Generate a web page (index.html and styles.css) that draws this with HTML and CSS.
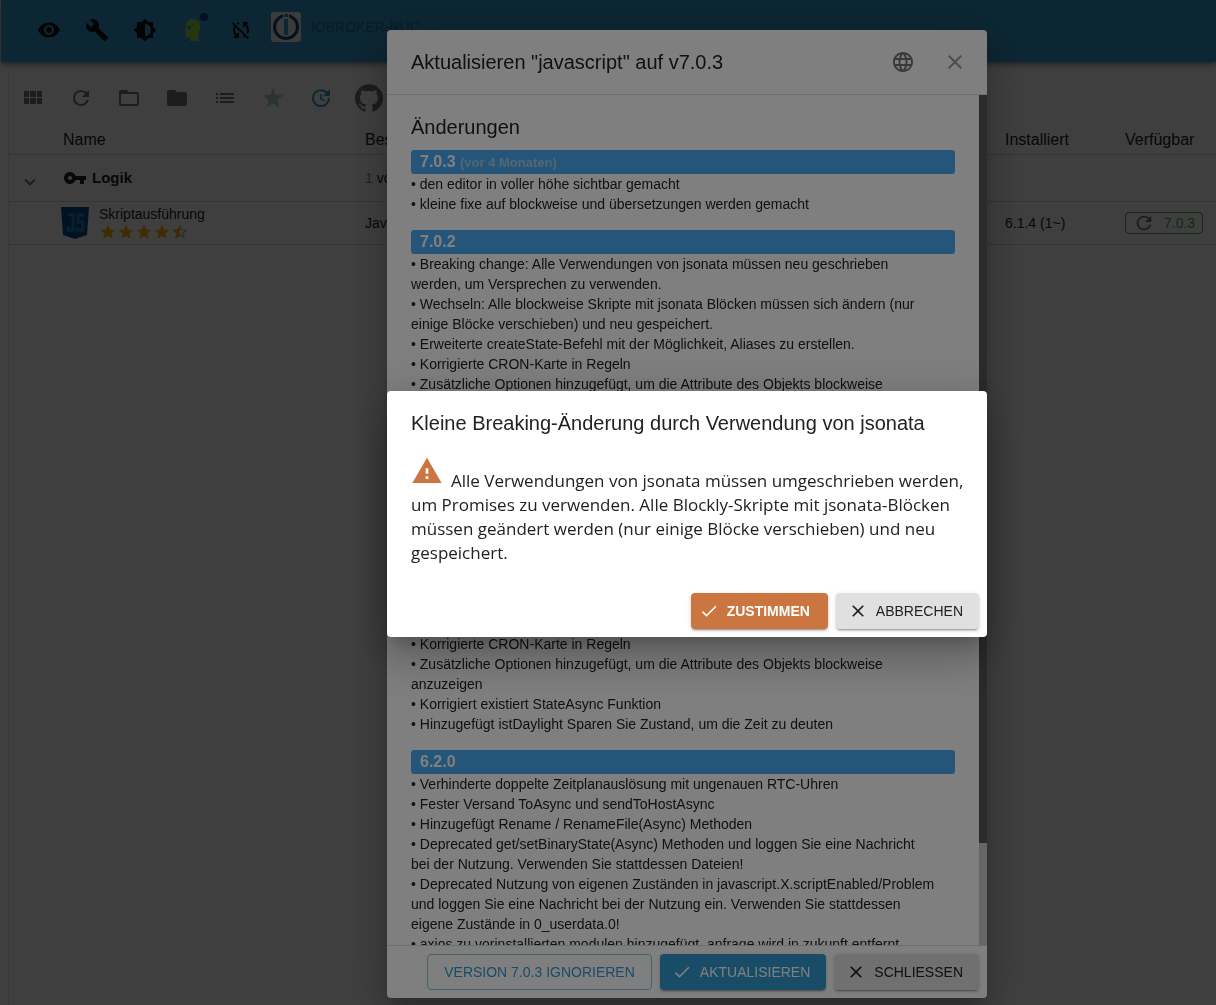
FILE: index.html
```html
<!DOCTYPE html>
<html lang="de">
<head>
    <meta charset="utf-8">
    <title>ioBroker</title>
    <link rel="stylesheet" href="styles.css">
</head>
<body>
<div class="app">
    <header class="appbar">
        <button class="icon-btn" aria-label="Anzeigen"><svg class="icon" viewBox="0 0 24 24"><path d="M12 4.5C7 4.5 2.73 7.61 1 12c1.73 4.39 6 7.5 11 7.5s9.27-3.11 11-7.5c-1.73-4.39-6-7.5-11-7.5zM12 17c-2.76 0-5-2.24-5-5s2.24-5 5-5 5 2.24 5 5-2.24 5-5 5zm0-8c-1.66 0-3 1.34-3 3s1.34 3 3 3 3-1.34 3-3-1.34-3-3-3z"/></svg></button>
        <button class="icon-btn" aria-label="Einstellungen"><svg class="icon" viewBox="0 0 24 24"><path d="M22.7 19l-9.1-9.1c.9-2.3.4-5-1.5-6.9-2-2-5-2.4-7.4-1.3L9 6 6 9 1.6 4.7C.4 7.1.9 10.1 2.9 12.1c1.9 1.9 4.6 2.4 6.9 1.5l9.1 9.1c.4.4 1 .4 1.4 0l2.3-2.3c.5-.4.5-1.1.1-1.4z"/></svg></button>
        <button class="icon-btn" aria-label="Farbschema"><svg class="icon" viewBox="0 0 24 24"><path d="M20 15.31L23.31 12 20 8.69V4h-4.69L12 .69 8.69 4H4v4.69L.69 12 4 15.31V20h4.69L12 23.31 15.31 20H20v-4.69zM12 18V6c3.31 0 6 2.69 6 6s-2.69 6-6 6z"/></svg></button>
        <button class="icon-btn expert" aria-label="Expertenmodus">
            <svg class="icon" viewBox="0 0 24 24"><path fill-rule="evenodd" d="M12 1c4.500 0 7.500 3 7.500 7.500 0 3-1.300 5-2 7V23H9v-3.500H6.500C5 19.500 4.500 19 4.500 17.500V14L3.500 13.500 4.500 10C4.500 4 7.500 1 12 1zM8 7.500a2 2 0 1 0 0 4 2 2 0 0 0 0-4zm4-1.500a1 1 0 1 0 0 2 1 1 0 0 0 0-2z"/></svg>
            <span class="badge"></span>
        </button>
        <button class="icon-btn" aria-label="Synchronisierung aus"><svg class="icon" viewBox="0 0 24 24"><path d="M10 6.350V4.260c-.8.210-1.550.540-2.230.960l1.460 1.460c.250-.120.500-.240.770-.330zm-7.140-.940l2.360 2.360C4.450 8.990 4 10.440 4 12c0 2.210.910 4.200 2.360 5.640L4 20h6v-6l-2.240 2.240C6.680 15.150 6 13.660 6 12c0-1 .250-1.940.680-2.770l8.080 8.080c-.250.130-.500.250-.770.340v2.090c.8-.210 1.550-.540 2.230-.960l2.360 2.360 1.270-1.270L4.140 4.140 2.860 5.410zM20 4h-6v6l2.240-2.240C17.320 8.850 18 10.340 18 12c0 1-.250 1.940-.680 2.770l1.460 1.460C19.550 15.010 20 13.560 20 12c0-2.210-.910-4.200-2.360-5.640L20 4z"/></svg></button>
        <svg class="logo" viewBox="0 0 30 30"><rect width="30" height="30" rx="3" fill="#eee"/><circle cx="15" cy="15" r="11.500" fill="none" stroke="#164477" stroke-width="3"/><path fill="#eee" d="M12 0h6v7h-6z"/><path fill="#3399cc" d="M13 2h4v3h-4zM13 7h4v16h-4z"/></svg>
        <span class="host">IOBROKER-NUC</span>
    </header>

    <main class="paper">
        <div class="tools">
            <button class="icon-btn" aria-label="Kacheln"><svg class="icon" viewBox="0 0 24 24"><path d="M3 11h5V5H3v6zm0 7h5v-6H3v6zm6 0h6v-6H9v6zm7 0h5v-6h-5v6zM9 11h6V5H9v6zm7-6v6h5V5h-5z"/></svg></button>
            <button class="icon-btn" aria-label="Neu laden"><svg class="icon" viewBox="0 0 24 24"><path d="M17.650 6.350C16.200 4.900 14.210 4 12 4c-4.420 0-7.990 3.580-7.990 8s3.570 8 7.990 8c3.730 0 6.840-2.550 7.730-6h-2.080c-.820 2.330-3.040 4-5.650 4-3.310 0-6-2.690-6-6s2.690-6 6-6c1.660 0 3.140.690 4.220 1.780L13 11h7V4l-2.350 2.350z"/></svg></button>
            <button class="icon-btn" aria-label="Alle zuklappen"><svg class="icon" viewBox="0 0 24 24"><path d="M20 6h-8l-2-2H4c-1.100 0-1.990.900-1.990 2L2 18c0 1.100.900 2 2 2h16c1.100 0 2-.900 2-2V8c0-1.100-.900-2-2-2zm0 12H4V8h16v10z"/></svg></button>
            <button class="icon-btn" aria-label="Alle aufklappen"><svg class="icon" viewBox="0 0 24 24"><path d="M10 4H4c-1.100 0-1.990.900-1.990 2L2 18c0 1.100.900 2 2 2h16c1.100 0 2-.900 2-2V8c0-1.100-.900-2-2-2h-8l-2-2z"/></svg></button>
            <button class="icon-btn" aria-label="Liste"><svg class="icon" viewBox="0 0 24 24"><path d="M3 13h2v-2H3v2zm0 4h2v-2H3v2zm0-8h2V7H3v2zm4 4h14v-2H7v2zm0 4h14v-2H7v2zM7 7v2h14V7H7z"/></svg></button>
            <button class="icon-btn star-btn" aria-label="Favoriten"><svg class="icon" viewBox="0 0 24 24"><path d="M12 17.270L18.180 21l-1.640-7.030L22 9.240l-7.190-.610L12 2 9.190 8.630 2 9.240l5.460 4.730L5.820 21z"/></svg></button>
            <button class="icon-btn active" aria-label="Aktualisierungen"><svg class="icon" viewBox="0 0 24 24"><path d="M21 10.120h-6.780l2.740-2.820c-2.730-2.700-7.150-2.800-9.880-.100-2.730 2.710-2.730 7.080 0 9.790s7.150 2.710 9.880 0C18.320 15.650 19 14.080 19 12.100h2c0 1.980-.880 4.550-2.640 6.290-3.510 3.480-9.210 3.480-12.720 0-3.500-3.470-3.530-9.110-.020-12.580s9.140-3.470 12.650 0L21 3v7.120zM12.500 8v4.250l3.500 2.080-.720 1.210L11 13V8h1.500z"/></svg></button>
            <button class="icon-btn" aria-label="GitHub"><svg class="icon github" viewBox="0 0 24 24"><path d="M12 .300a12 12 0 0 0-3.800 23.400c.600.100.800-.300.800-.600v-2c-3.300.700-4-1.600-4-1.600-.600-1.400-1.400-1.800-1.400-1.800-1-.700.100-.700.100-.700 1.200 0 1.900 1.200 1.900 1.200 1 1.800 2.800 1.300 3.500 1 0-.800.400-1.300.700-1.600-2.700-.300-5.500-1.300-5.500-6 0-1.200.500-2.300 1.300-3.100-.200-.400-.600-1.600 0-3.200 0 0 1-.300 3.400 1.200a11.500 11.500 0 0 1 6 0c2.300-1.500 3.300-1.200 3.300-1.200.600 1.600.200 2.800 0 3.200.900.800 1.300 1.900 1.300 3.200 0 4.600-2.800 5.600-5.500 5.900.500.400.900 1 .900 2.200v3.300c0 .300.100.700.800.600A12 12 0 0 0 12 .300"/></svg></button>
        </div>

        <table class="adapters">
            <colgroup><col class="col-toggle"><col class="col-name"><col><col class="col-installed"><col class="col-available"></colgroup>
            <thead>
                <tr><th></th><th>Name</th><th>Beschreibung</th><th>Installiert</th><th>Verfügbar</th></tr>
            </thead>
            <tbody>
                <tr class="group">
                    <td><button class="toggle" aria-label="Zuklappen"><svg viewBox="0 0 24 24"><path d="M16.590 8.590L12 13.170 7.410 8.590 6 10l6 6 6-6z"/></svg></button></td>
                    <td><div class="group-name"><svg class="icon" viewBox="0 0 24 24"><path d="M12.650 10C11.830 7.670 9.610 6 7 6c-3.310 0-6 2.690-6 6s2.690 6 6 6c2.610 0 4.830-1.670 5.650-4H17v4h4v-4h2v-4H12.650zM7 14c-1.100 0-2-.900-2-2s.900-2 2-2 2 .900 2 2-.900 2-2 2z"/></svg>Logik</div></td>
                    <td><span class="green">1</span> von 1</td>
                    <td></td>
                    <td></td>
                </tr>
                <tr class="adapter">
                    <td></td>
                    <td>
                        <div class="adapter-name">
                            <svg class="js" viewBox="0 0 28 32"><path fill="#004a90" d="M0 0h28l-2 28-12 4-12-4z"/><path fill="none" stroke="#2a86ac" stroke-width="3" d="M7 8h5v15H7v-4M23 8h-6v7h5v8h-6v-3"/></svg>
                            <div>
                                <div>Skriptausführung</div>
                                <div class="rating">
                                    <svg viewBox="0 0 24 24"><path d="M12 17.270L18.180 21l-1.640-7.030L22 9.240l-7.190-.610L12 2 9.190 8.630 2 9.240l5.460 4.730L5.820 21z"/></svg>
                                    <svg viewBox="0 0 24 24"><path d="M12 17.270L18.180 21l-1.640-7.030L22 9.240l-7.190-.610L12 2 9.190 8.630 2 9.240l5.460 4.730L5.820 21z"/></svg>
                                    <svg viewBox="0 0 24 24"><path d="M12 17.270L18.180 21l-1.640-7.030L22 9.240l-7.190-.610L12 2 9.190 8.630 2 9.240l5.460 4.730L5.820 21z"/></svg>
                                    <svg viewBox="0 0 24 24"><path d="M12 17.270L18.180 21l-1.640-7.030L22 9.240l-7.190-.610L12 2 9.190 8.630 2 9.240l5.460 4.730L5.820 21z"/></svg>
                                    <svg viewBox="0 0 24 24"><path fill="#aaa" d="M22 9.240l-7.190-.620L12 2 9.190 8.630 2 9.240l5.460 4.730L5.820 21 12 17.270 18.180 21l-1.630-7.030L22 9.240zM12 15.400V6.100l1.710 4.040 4.380.380-3.320 2.880 1 4.280L12 15.400z"/><path d="M12 2v15.270L5.820 21l1.640-7.030L2 9.240l7.190-.610z"/></svg>
                                </div>
                            </div>
                        </div>
                    </td>
                    <td>Javascript/Blockly</td>
                    <td>6.1.4 (1~)</td>
                    <td><button class="update"><svg viewBox="0 0 24 24"><path d="M17.650 6.350C16.200 4.900 14.210 4 12 4c-4.420 0-7.990 3.580-7.990 8s3.570 8 7.990 8c3.730 0 6.840-2.550 7.730-6h-2.080c-.820 2.330-3.040 4-5.650 4-3.310 0-6-2.690-6-6s2.690-6 6-6c1.660 0 3.140.690 4.220 1.780L13 11h7V4l-2.350 2.350z"/></svg>7.0.3</button></td>
                </tr>
            </tbody>
        </table>
    </main>
</div>

<div class="overlay">
    <section class="dialog changes" role="dialog" aria-label="Aktualisieren">
        <div class="dialog-head">
            <h2>Aktualisieren "javascript" auf v7.0.3</h2>
            <button class="head-btn" aria-label="Sprache"><svg class="icon" viewBox="0 0 24 24"><path d="M11.990 2C6.470 2 2 6.480 2 12s4.470 10 9.990 10C17.520 22 22 17.520 22 12S17.520 2 11.990 2zm6.930 6h-2.950c-.320-1.250-.780-2.450-1.380-3.560 1.840.630 3.370 1.910 4.330 3.560zM12 4.040c.830 1.200 1.480 2.530 1.910 3.960h-3.820c.430-1.430 1.080-2.760 1.910-3.960zM4.260 14C4.100 13.360 4 12.690 4 12s.100-1.360.260-2h3.380c-.080.660-.140 1.320-.140 2s.060 1.340.140 2H4.260zm.820 2h2.950c.320 1.250.780 2.450 1.380 3.560-1.840-.630-3.370-1.900-4.330-3.560zm2.950-8H5.080c.960-1.660 2.490-2.930 4.330-3.560C8.810 5.550 8.350 6.750 8.030 8zM12 19.960c-.830-1.200-1.480-2.530-1.910-3.960h3.820c-.430 1.430-1.080 2.760-1.910 3.960zM14.340 14H9.660c-.090-.660-.160-1.320-.160-2s.070-1.350.160-2h4.680c.090.650.160 1.320.160 2s-.070 1.340-.160 2zm.250 5.560c.600-1.110 1.060-2.310 1.380-3.560h2.950c-.960 1.650-2.490 2.930-4.330 3.560zM16.360 14c.080-.660.140-1.320.140-2s-.060-1.340-.140-2h3.380c.160.640.260 1.310.260 2s-.100 1.360-.260 2h-3.380z"/></svg></button>
            <button class="head-btn light" aria-label="Dialog schließen"><svg class="icon" viewBox="0 0 24 24"><path d="M19 6.410L17.590 5 12 10.590 6.410 5 5 6.410 10.590 12 5 17.590 6.410 19 12 13.410 17.590 19 19 17.590 13.410 12z"/></svg></button>
        </div>
        <div class="dialog-body">
            <div class="log">
                <h3>Änderungen</h3>
                <div class="version">
                    <h4>7.0.3 <small>(vor 4 Monaten)</small></h4>
                    <p>• den editor in voller höhe sichtbar gemacht</p>
                    <p>• kleine fixe auf blockweise und übersetzungen werden gemacht</p>
                </div>
                <div class="version">
                    <h4>7.0.2</h4>
                    <p>• Breaking change: Alle Verwendungen von jsonata müssen neu geschrieben<br>werden, um Versprechen zu verwenden.</p>
                    <p>• Wechseln: Alle blockweise Skripte mit jsonata Blöcken müssen sich ändern (nur<br>einige Blöcke verschieben) und neu gespeichert.</p>
                    <p>• Erweiterte createState-Befehl mit der Möglichkeit, Aliases zu erstellen.</p>
                    <p>• Korrigierte CRON-Karte in Regeln</p>
                    <p>• Zusätzliche Optionen hinzugefügt, um die Attribute des Objekts blockweise<br>anzuzeigen</p>
                    <p>• Korrigiert existiert StateAsync Funktion</p>
                    <p>• Hinzugefügt istDaylight Sparen Sie Zustand, um die Zeit zu deuten</p>
                    <p>• Übersetzungen aktualisiert</p>
                    <p>• Kleine Korrekturen</p>
                </div>
                <div class="version">
                    <h4>7.0.0</h4>
                    <p>• Breaking change: Alle Verwendungen von jsonata müssen neu geschrieben<br>werden, um Versprechen zu verwenden.</p>
                    <p>• Wechseln: Alle blockweise Skripte mit jsonata Blöcken müssen sich ändern (nur<br>einige Blöcke verschieben) und neu gespeichert.</p>
                    <p>• Erweiterte createState-Befehl mit der Möglichkeit, Aliases zu erstellen.</p>
                    <p>• Korrigierte CRON-Karte in Regeln</p>
                    <p>• Zusätzliche Optionen hinzugefügt, um die Attribute des Objekts blockweise<br>anzuzeigen</p>
                    <p>• Korrigiert existiert StateAsync Funktion</p>
                    <p>• Hinzugefügt istDaylight Sparen Sie Zustand, um die Zeit zu deuten</p>
                </div>
                <div class="version">
                    <h4>6.2.0</h4>
                    <p>• Verhinderte doppelte Zeitplanauslösung mit ungenauen RTC-Uhren</p>
                    <p>• Fester Versand ToAsync und sendToHostAsync</p>
                    <p>• Hinzugefügt Rename / RenameFile(Async) Methoden</p>
                    <p>• Deprecated get/setBinaryState(Async) Methoden und loggen Sie eine Nachricht<br>bei der Nutzung. Verwenden Sie stattdessen Dateien!</p>
                    <p>• Deprecated Nutzung von eigenen Zuständen in javascript.X.scriptEnabled/Problem<br>und loggen Sie eine Nachricht bei der Nutzung ein. Verwenden Sie stattdessen<br>eigene Zustände in 0_userdata.0!</p>
                    <p>• axios zu vorinstallierten modulen hinzugefügt, anfrage wird in zukunft entfernt</p>
                </div>
            </div>
            <div class="scrollbar"><div class="thumb"></div></div>
        </div>
        <div class="actions">
            <button class="btn outlined">VERSION 7.0.3 IGNORIEREN</button>
            <button class="btn primary"><svg viewBox="0 0 24 24"><path d="M9 16.170L4.830 12l-1.420 1.410L9 19 21 7l-1.410-1.410z"/></svg>AKTUALISIEREN</button>
            <button class="btn grey"><svg viewBox="0 0 24 24"><path d="M19 6.410L17.590 5 12 10.590 6.410 5 5 6.410 10.590 12 5 17.590 6.410 19 12 13.410 17.590 19 19 17.590 13.410 12z"/></svg>SCHLIESSEN</button>
        </div>
    </section>
</div>

<div class="overlay">
    <section class="dialog" role="dialog" aria-label="Warnung">
        <h2 class="confirm-title">Kleine Breaking-Änderung durch Verwendung von jsonata</h2>
        <p class="message"><svg class="warning" viewBox="0 0 24 24"><path d="M1 21h22L12 2 1 21zm12-3h-2v-2h2v2zm0-4h-2v-4h2v4z"/></svg>Alle Verwendungen von jsonata müssen umgeschrieben werden,<br>um Promises zu verwenden. Alle Blockly-Skripte mit jsonata-Blöcken<br>müssen geändert werden (nur einige Blöcke verschieben) und neu<br>gespeichert.</p>
        <div class="actions plain">
            <button class="btn orange"><svg viewBox="0 0 24 24"><path d="M9 16.170L4.830 12l-1.420 1.410L9 19 21 7l-1.410-1.410z"/></svg>ZUSTIMMEN</button>
            <button class="btn grey"><svg viewBox="0 0 24 24"><path d="M19 6.410L17.590 5 12 10.590 6.410 5 5 6.410 10.590 12 5 17.590 6.410 19 12 13.410 17.590 19 19 17.590 13.410 12z"/></svg>ABBRECHEN</button>
        </div>
    </section>
</div>
</body>
</html>
```
FILE: styles.css
```css
* { box-sizing: border-box; }
html, body { height: 100%; }
body { margin: 0; background: #fff; color: #222; font-family: "Liberation Sans", Arial, sans-serif; font-size: 14px; line-height: 20px; overflow: hidden; }
h2, h3, h4, p { margin: 0; font-weight: normal; }
button { font-family: inherit; font-size: 14px; border: 0; background: none; color: inherit; padding: 0; cursor: pointer; }
svg { display: block; fill: currentColor; flex: none; }

.app { height: 100%; display: flex; flex-direction: column; padding-left: 1px; }
.icon { width: 24px; height: 24px; }
.icon-btn { width: 48px; height: 48px; display: flex; align-items: center; justify-content: center; flex: none; }

/* top bar */
.appbar { height: 62px; flex: none; display: flex; align-items: flex-start; padding: 6px 24px; background: #3399cc; box-shadow: 0 2px 4px rgba(0,0,0,.3), 0 4px 8px rgba(0,0,0,.2); }
.appbar .icon { color: #111; }
.appbar .expert .icon { color: #8ed83c; }
.expert { position: relative; }
.badge { position: absolute; top: 7px; right: 9px; width: 8px; height: 8px; border-radius: 50%; background: #143c84; }
.logo { width: 30px; height: 30px; margin: 6px 10px 0 6px; }
.host { padding-top: 11px; color: #1d6e97; }

/* adapter list */
.paper { flex: 1; margin: 8px 0 0 7px; border-left: 1px solid #e4e4e4; }
.tools { display: flex; align-items: center; height: 56px; color: #757575; }
.tools .github { width: 28px; height: 28px; }
.star-btn { color: #b0ccd9; }
.active { color: #3399cc; }
.adapters { width: 100%; table-layout: fixed; border-collapse: collapse; }
.col-toggle { width: 52px; }
.col-name { width: 304px; }
.col-installed { width: 120px; }
.col-available { width: 91px; }
.adapters th { text-align: left; font-weight: normal; font-size: 16px; height: 28px; padding: 0; }
.adapters th:nth-child(2) { padding-left: 2px; }
.adapters td { padding: 0; }
.adapters tr { border-bottom: 1px solid #d4d4d4; }
.group td { height: 47px; }
.adapter td { height: 43px; }
.toggle { display: block; margin: 8px 0 0 10px; color: #757575; }
.toggle svg { width: 22px; height: 22px; }
.group-name { display: flex; align-items: center; gap: 5px; padding-left: 2px; font-size: 15px; font-weight: bold; }
.green { color: #4caf50; }
.adapter-name { display: flex; align-items: center; gap: 10px; line-height: 18px; }
.js { width: 28px; height: 32px; }
.rating { display: flex; color: #ffb400; }
.rating svg { width: 18px; height: 18px; }
.update { display: flex; align-items: center; gap: 9px; width: 78px; height: 22px; padding-left: 7px; border: 1px solid #4caf50; border-radius: 4px; color: #4caf50; }
.update svg { width: 22px; height: 22px; color: #757575; }

/* dialogs */
.overlay { position: fixed; inset: 0; display: flex; align-items: center; justify-content: center; padding: 30px 0 7px 158px; background: rgba(0,0,0,.5); }
.dialog { width: 600px; max-width: 100%; background: #fff; border-radius: 4px; box-shadow: 0 11px 15px -7px rgba(0,0,0,.2), 0 24px 38px 3px rgba(0,0,0,.14), 0 9px 46px 8px rgba(0,0,0,.12); }
.changes { height: 100%; display: flex; flex-direction: column; overflow: hidden; }
.dialog h2, .dialog h3 { font-size: 20px; line-height: 32px; }
.dialog-head { display: flex; align-items: center; height: 65px; padding: 0 8px 0 24px; border-bottom: 1px solid #dcdcdc; }
.dialog-head h2 { flex: 1; }
.head-btn { width: 48px; height: 48px; margin-left: 4px; display: flex; align-items: center; justify-content: center; color: #757575; }
.head-btn.light { color: #999; }
.dialog-body { flex: 1; min-height: 0; display: flex; }
.log { flex: 1; overflow: hidden; padding: 16px 24px; }
.log h3 { margin-bottom: 7px; }
.version { margin-bottom: 16px; }
.version h4 { height: 24px; padding-left: 9px; border-radius: 3px; background: #4dabf5; color: #fff; font-size: 16px; line-height: 24px; font-weight: bold; }
.version small { font-size: 13px; color: #a5cce9; }
.scrollbar { width: 8px; background: #ccc; }
.thumb { height: 88%; background: #575757; }

.actions { display: flex; justify-content: flex-end; gap: 8px; padding: 8px; border-top: 1px solid #dcdcdc; }
.actions.plain { border-top: 0; }
.btn { height: 36px; display: flex; align-items: center; gap: 8px; padding: 0 16px 0 12px; border-radius: 4px; white-space: nowrap; box-shadow: 0 3px 1px -2px rgba(0,0,0,.2), 0 2px 2px rgba(0,0,0,.14), 0 1px 5px rgba(0,0,0,.12); }
.btn svg { width: 20px; height: 20px; }
.outlined { padding: 0 16px; border: 1px solid #8ac2e0; color: #3399cc; box-shadow: none; }
.primary { background: #3399cc; color: #fff; }
.grey { background: #e0e0e0; color: #222; }
.orange { padding: 0 18px 0 8px; background: #cb7641; color: #fff; font-weight: bold; }

.confirm-title { padding: 16px 24px; }
.message { padding: 0 24px 20px; font-family: "Open Sans", "Segoe UI", sans-serif; font-size: 17px; line-height: 24px; white-space: nowrap; }
.warning { display: inline-block; width: 32px; height: 32px; margin-right: 8px; color: #cb7641; }
```
